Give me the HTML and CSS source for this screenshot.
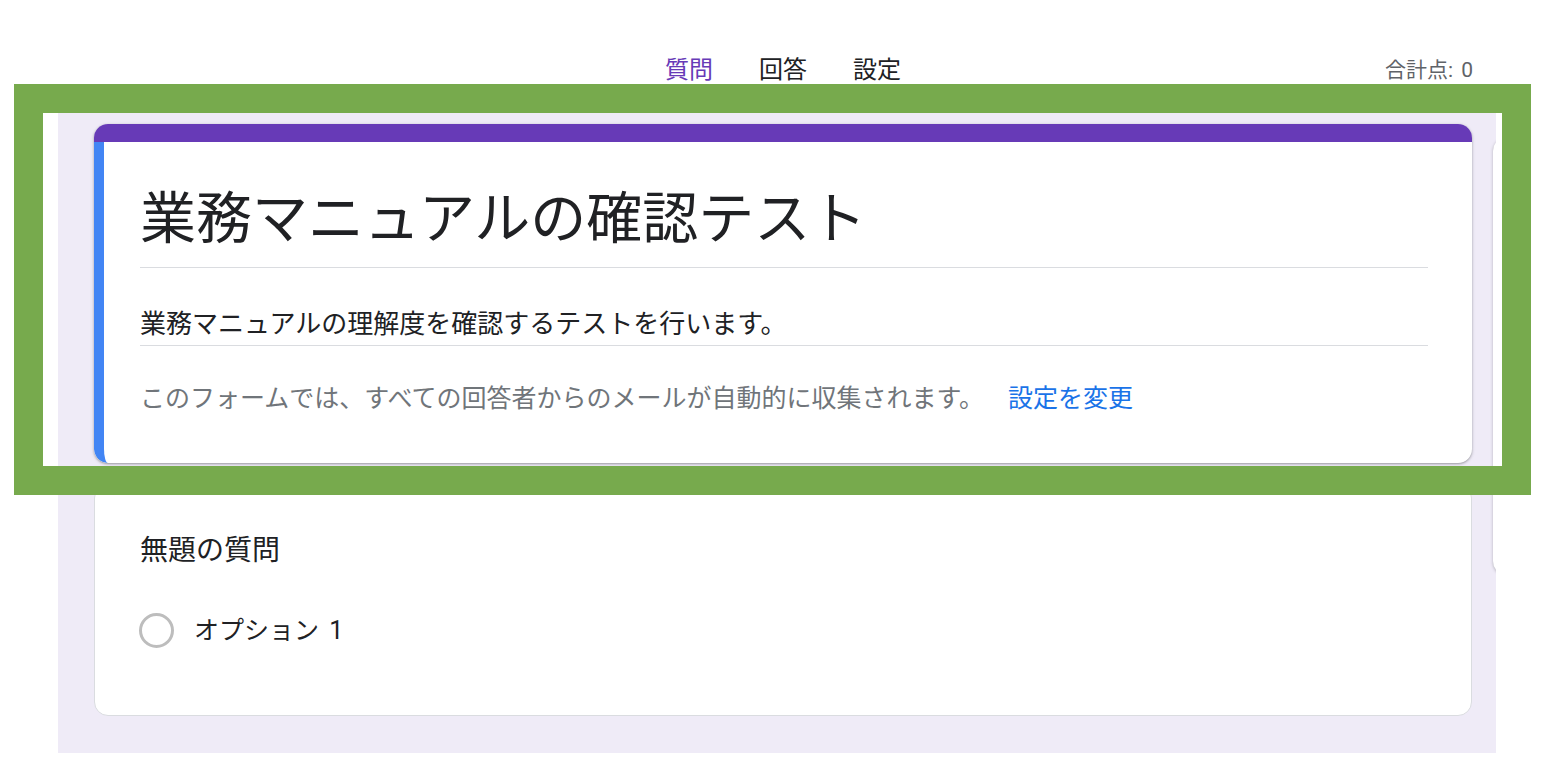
FILE: index.html
```html
<!DOCTYPE html>
<html lang="ja">
<head>
<meta charset="utf-8">
<title>業務マニュアルの確認テスト</title>
<link rel="stylesheet" href="styles.css">
</head>
<body>
<header class="topbar">
  <nav class="tabs">
    <span class="tab tab-active">質問</span>
    <span class="tab">回答</span>
    <span class="tab">設定</span>
  </nav>
  <div class="total">合計点: 0</div>
</header>
<main class="canvas">
  <section class="card card-head">
    <div class="head-stripe"></div>
    <div class="head-body">
      <div class="field field-title">業務マニュアルの確認テスト</div>
      <div class="field field-desc">業務マニュアルの理解度を確認するテストを行います。</div>
      <p class="notice">このフォームでは、すべての回答者からのメールが自動的に収集されます。<a class="notice-link">設定を変更</a></p>
    </div>
  </section>
  <section class="card card-question">
    <div class="q-title">無題の質問</div>
    <div class="option">
      <span class="radio"></span>
      <span class="option-label">オプション 1</span>
    </div>
  </section>
  <div class="side-toolbar"></div>
</main>
<div class="highlight"></div>
</body>
</html>
```
FILE: styles.css
```css
* { box-sizing: border-box; }
html, body { margin: 0; padding: 0; }
body {
  background: #ffffff;
  font-family: Roboto, "Noto Sans CJK JP", sans-serif;
  color: #202124;
  width: 1544px;
  height: 782px;
  overflow: hidden;
  position: relative;
}
.topbar {
  height: 100px;
  display: flex;
  align-items: flex-start;
  padding: 55px 71px 0 665px;
}
.tabs {
  display: flex;
  gap: 46px;
}
.tab {
  font-size: 24px;
  line-height: 30px;
  color: #202124;
}
.tab-active { color: #673ab7; }
.total {
  margin-left: auto;
  font-size: 21px;
  line-height: 30px;
  color: #5f6368;
  word-spacing: 3px;
}
.canvas {
  margin-left: 58px;
  width: 1438px;
  height: 653px;
  background: #efebf7;
  padding: 24px 0 0 36px;
  position: relative;
  overflow: hidden;
}
.card {
  width: 1378px;
  background: #ffffff;
  border-radius: 14px;
}
.card-head {
  height: 339px;
  display: flex;
  flex-direction: column;
  overflow: hidden;
  box-shadow: 0 1px 2px rgba(60, 64, 67, 0.35), 0 1px 3px 1px rgba(60, 64, 67, 0.12);
}
.head-stripe {
  height: 18px;
  background: #673ab7;
  flex: none;
}
.head-body {
  flex: 1;
  border-left: 10px solid #4285f4;
  border-bottom-left-radius: 14px;
  padding: 43px 44px 0 36px;
}
.field {
  border-bottom: 1px solid #dadce0;
}
.field-title {
  font-size: 56px;
  line-height: 68px;
  padding-bottom: 14px;
}
.field-desc {
  margin-top: 38px;
  font-size: 26px;
  line-height: 36px;
  padding-bottom: 3px;
}
.notice {
  margin: 35px 0 0;
  font-size: 25px;
  line-height: 36px;
  color: #70757a;
}
.notice-link {
  color: #1a73e8;
  margin-left: 24px;
}
.card-question {
  margin-top: 21px;
  height: 232px;
  border: 1px solid #dadce0;
  padding: 46px 44px 0 45px;
}
.q-title {
  font-size: 28px;
  line-height: 40px;
  color: #202124;
}
.option {
  margin-top: 42px;
  display: flex;
  align-items: center;
  gap: 20px;
}
.radio {
  width: 35px;
  height: 35px;
  margin-left: -1px;
  border: 3.5px solid #bdbdbd;
  border-radius: 50%;
  flex: none;
}
.option-label {
  font-size: 25px;
  line-height: 35px;
  color: #202124;
  word-spacing: 4px;
}
.side-toolbar {
  position: absolute;
  left: 1435px;
  top: 37px;
  width: 100px;
  height: 438px;
  background: #ffffff;
  border-radius: 14px;
  box-shadow: 0 1px 3px rgba(60, 64, 67, 0.35);
}
.highlight {
  position: absolute;
  left: 14px;
  top: 84px;
  width: 1517px;
  height: 411px;
  border: 29px solid #77aa4d;
  pointer-events: none;
}
```
